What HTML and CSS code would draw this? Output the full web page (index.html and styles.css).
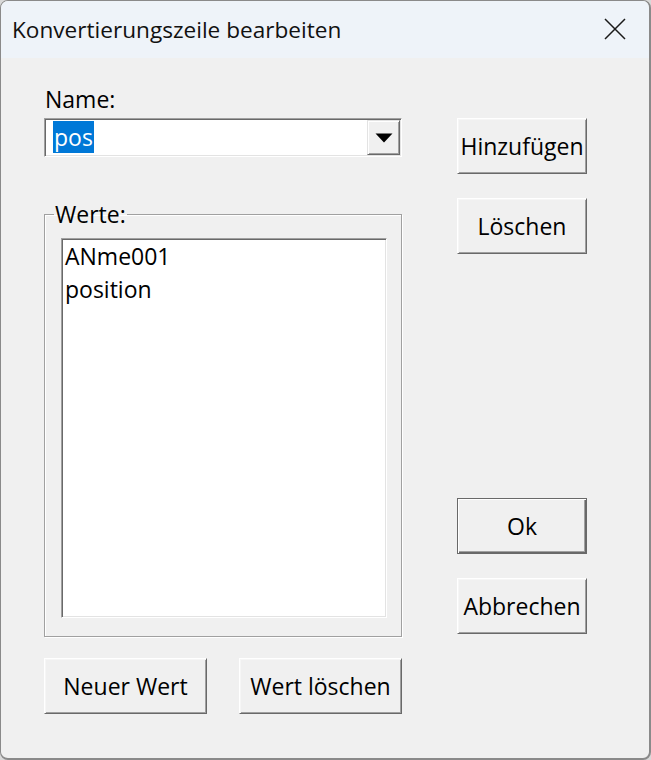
FILE: index.html
```html
<!DOCTYPE html>
<html lang="de">
<head>
<meta charset="utf-8">
<title>Konvertierungszeile bearbeiten</title>
<link rel="stylesheet" href="styles.css">
</head>
<body>
<div class="window">
  <div class="titlebar">
    <span class="title">Konvertierungszeile bearbeiten</span>
    <span class="close">
      <svg width="22" height="22" viewBox="0 0 22 22"><path d="M1 1 L21 21 M21 1 L1 21" stroke="#1a1a1a" stroke-width="1.5" fill="none"/></svg>
    </span>
  </div>
  <div class="content">
    <div class="left">
      <div class="label">Name:</div>
      <div class="combo">
        <div class="combo-text"><span class="sel">pos</span></div>
        <div class="combo-btn">
          <svg width="18" height="10" viewBox="0 0 18 10"><path d="M0.5 0.5 L17.5 0.5 L9 9.5 Z" fill="#000"/></svg>
        </div>
      </div>
      <fieldset class="group">
        <legend class="legend">Werte:</legend>
        <div class="listbox">
          <div class="item">ANme001</div>
          <div class="item">position</div>
        </div>
      </fieldset>
      <div class="btnrow">
        <div class="btn wide">Neuer Wert</div>
        <div class="btn wide">Wert löschen</div>
      </div>
    </div>
    <div class="right">
      <div class="btn">Hinzufügen</div>
      <div class="btn gap">Löschen</div>
      <div class="btn default spacer">Ok</div>
      <div class="btn gap">Abbrechen</div>
    </div>
  </div>
</div>
</body>
</html>
```
FILE: styles.css
```css
* { box-sizing: border-box; }
html, body { margin: 0; padding: 0; }
body {
  width: 651px;
  height: 760px;
  overflow: hidden;
  font-family: "Open Sans", "Noto Sans", sans-serif;
  color: #000;
  background: #d8d8d8;
}
.window {
  width: 651px;
  height: 760px;
  border: 1px solid #8a8a8a;
  border-right-width: 2px;
  border-bottom-width: 2px;
  border-radius: 8px;
  background: #f0f0f0;
  overflow: hidden;
}
.titlebar {
  height: 57px;
  background: #eef3f9;
  display: flex;
  align-items: center;
  justify-content: space-between;
  padding: 0 23px 0 11px;
}
.title {
  font-size: 22.6px;
  color: #111;
}
.close {
  display: flex;
  width: 22px;
  height: 22px;
  margin-top: -1px;
}
.content {
  display: flex;
  padding-left: 43px;
}
.left {
  width: 358px;
  display: flex;
  flex-direction: column;
}
.label {
  margin-top: 26px;
  height: 30px;
  line-height: 30px;
  font-size: 23px;
  padding-left: 1px;
}
.combo {
  margin-top: 4px;
  height: 39px;
  width: 358px;
  border: 1px solid;
  border-color: #a0a0a0 #ffffff #ffffff #a0a0a0;
  box-shadow: inset 1px 1px 0 #696969, inset -1px -1px 0 #e3e3e3;
  background: #fff;
  display: flex;
  padding: 1px;
}
.combo-text {
  flex: 1;
  padding-left: 7px;
  padding-top: 1px;
}
.sel {
  display: inline-block;
  background: #0078d7;
  color: #fff;
  font-size: 23px;
  line-height: 33px;
  height: 32px;
  padding: 0 1px 0 1px;
}
.combo-btn {
  width: 33px;
  height: 35px;
  background: #f0f0f0;
  border: 1px solid;
  border-color: #e3e3e3 #696969 #696969 #e3e3e3;
  box-shadow: inset 1px 1px 0 #fff, inset -1px -1px 0 #a0a0a0;
  display: flex;
  align-items: center;
  justify-content: center;
  padding-top: 1px;
}
.group {
  margin: 42px 0 0 0;
  padding: 0 14px 18px 16px;
  width: 358px;
  border: 1px solid #a0a0a0;
  box-shadow: inset 1px 1px 0 #fff, 1px 1px 0 #fff;
  min-width: 0;
}
.legend {
  font-size: 23px;
  line-height: 30px;
  padding: 0 1px;
  margin-left: -7px;
}
.listbox {
  margin-top: 9px;
  height: 380px;
  width: 326px;
  background: #fff;
  border: 1px solid;
  border-color: #a0a0a0 #ffffff #ffffff #a0a0a0;
  box-shadow: inset 1px 1px 0 #696969, inset -1px -1px 0 #e3e3e3;
  padding: 1px 2px 0 3px;
}
.item {
  font-size: 23px;
  line-height: 33px;
  height: 33px;
}
.btnrow {
  margin-top: 21px;
  display: flex;
  gap: 32px;
}
.right {
  margin-left: 55px;
  width: 130px;
  display: flex;
  flex-direction: column;
  padding-top: 60px;
}
.btn {
  width: 130px;
  height: 56px;
  background: #f0f0f0;
  border: 1px solid;
  border-color: #ffffff #696969 #696969 #ffffff;
  box-shadow: inset 1px 1px 0 #f6f6f6, inset -1px -1px 0 #a0a0a0;
  display: flex;
  align-items: center;
  justify-content: center;
  font-size: 23px;
  line-height: 30px;
  white-space: nowrap;
}
.btn.wide { width: 163px; }
.btn.gap { margin-top: 24px; }
.btn.spacer { margin-top: 244px; }
.btn.default {
  border: 1px solid #696969;
  box-shadow: inset 1px 1px 0 #ffffff, inset -1px -1px 0 #696969, inset -2px -2px 0 #a0a0a0;
}
```
